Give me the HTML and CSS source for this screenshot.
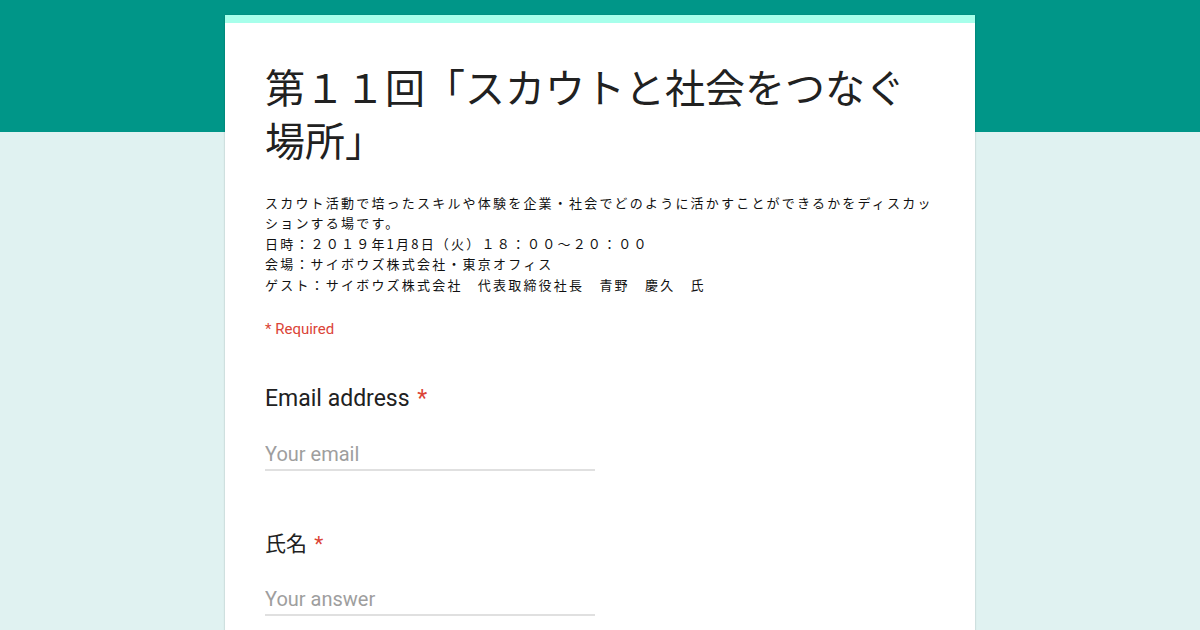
FILE: index.html
```html
<!DOCTYPE html>
<html lang="ja">

<head>
    <meta charset="UTF-8">
    <meta name="viewport" content="width=device-width, initial-scale=1.0">
    <title>第１１回「スカウトと社会をつなぐ場所」</title>
    <link rel="stylesheet" href="styles.css">
</head>

<body>
    <div class="page">
        <form class="form-card">
            <div class="form-header">
                <h1 class="form-title">第１１回「スカウトと社会をつなぐ場所」</h1>
                <div class="form-description">
                    スカウト活動で培ったスキルや体験を企業・社会でどのように活かすことができるかをディスカッションする場です。<br>
                    日時：２０１９年1月8日（火）１８：００～２０：００<br>
                    会場：サイボウズ株式会社・東京オフィス<br>
                    ゲスト：サイボウズ株式会社　代表取締役社長　青野　慶久　氏
                </div>
                <div class="required-note">* Required</div>
            </div>

            <div class="questions">
                <div class="question">
                    <div class="question-title">Email address <span class="star">*</span></div>
                    <input class="text-input" type="email" placeholder="Your email">
                </div>

                <div class="question">
                    <div class="question-title question-title-ja">氏名 <span class="star">*</span></div>
                    <input class="text-input" type="text" placeholder="Your answer">
                </div>
            </div>
        </form>
    </div>
</body>

</html>
```

FILE: styles.css
```css
:root {
    --header-bg: #009688;
    --page-bg: #e0f2f1;
    --accent: #a7ffeb;
    --text: #212121;
    --placeholder: #9e9e9e;
    --required: #db4437;
    --line: #e0e0e0;
}

* {
    margin: 0;
    padding: 0;
    box-sizing: border-box;
}

body {
    font-family: 'Roboto', 'Noto Sans CJK JP', sans-serif;
    color: var(--text);
    background: linear-gradient(to bottom, var(--header-bg) 0, var(--header-bg) 132px, var(--page-bg) 132px);
    height: 100vh;
    overflow: hidden;
}

.page {
    display: flex;
    justify-content: center;
    padding-top: 15px;
}

.form-card {
    width: 750px;
    background-color: #fff;
    border-top: 8px solid var(--accent);
    box-shadow: 0 1px 2px rgba(0, 0, 0, 0.18), 0 0 1px rgba(0, 0, 0, 0.12);
    padding: 37px 40px 0;
    min-height: 640px;
}

.form-title {
    font-family: 'Noto Sans CJK JP', sans-serif;
    font-size: 40px;
    font-weight: 400;
    line-height: 53px;
    color: var(--text);
}

.form-description {
    font-family: 'Noto Sans CJK JP', sans-serif;
    font-size: 13px;
    line-height: 20.4px;
    letter-spacing: 2.2px;
    margin-top: 27px;
    color: #111;
}

.required-note {
    font-size: 15px;
    line-height: 20px;
    color: var(--required);
    margin-top: 24px;
}

.questions {
    display: flex;
    flex-direction: column;
    gap: 58px;
    margin-top: 45px;
}

.question {
    display: flex;
    flex-direction: column;
}

.question-title {
    font-size: 23px;
    line-height: 30px;
    color: var(--text);
}

.question-title-ja {
    font-size: 21px;
}

.star {
    color: var(--required);
    margin-left: 2px;
}

.text-input {
    width: 330px;
    margin-top: 25px;
    height: 32px;
    border: none;
    border-bottom: 2px solid var(--line);
    font-family: 'Roboto', sans-serif;
    font-size: 20px;
    color: var(--text);
    outline: none;
    padding: 0;
}

.text-input::placeholder {
    color: var(--placeholder);
}
```
